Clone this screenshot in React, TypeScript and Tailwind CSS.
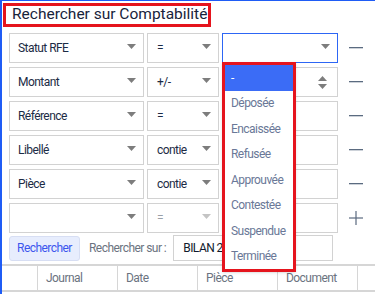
import React from "react";

type Row = {
  field: string;
  op: string;
  kind?: "focus" | "number" | "plain";
  action: "minus" | "plus";
  disabledOp?: boolean;
};

const rows: Row[] = [
  { field: "Statut RFE", op: "=", kind: "focus", action: "minus" },
  { field: "Montant", op: "+/-", kind: "number", action: "minus" },
  { field: "Référence", op: "=", action: "minus" },
  { field: "Libellé", op: "contie", action: "minus" },
  { field: "Pièce", op: "contie", action: "minus" },
  { field: "", op: "=", action: "plus", disabledOp: true },
];

const options = [
  "-",
  "Déposée",
  "Encaissée",
  "Refusée",
  "Approuvée",
  "Contestée",
  "Suspendue",
  "Terminée",
];

const columns = ["Journal", "Date", "Pièce", "Document"];

function Caret({ light }: { light?: boolean }) {
  return (
    <svg width="9" height="5" viewBox="0 0 9 5" className="shrink-0">
      <polygon points="0,0 9,0 4.5,5" fill={light ? "#c4c4c4" : "#7d7d7d"} />
    </svg>
  );
}

function Spinner() {
  return (
    <svg width="9" height="15" viewBox="0 0 9 15" className="shrink-0">
      <polygon points="0,6 9,6 4.5,1" fill="#7d7d7d" />
      <polygon points="0,9 9,9 4.5,14" fill="#7d7d7d" />
    </svg>
  );
}

function SearchRow({ row }: { row: Row }) {
  return (
    <div className="flex h-[30px] gap-[3px]">
      {/* field select */}
      <div className="flex w-[135px] items-center justify-between border border-[#d2d2d2] pl-[8px] pr-[7px] text-[#1c2b45]">
        <span>{row.field}</span>
        <span className="-mt-[3px]">
          <Caret />
        </span>
      </div>
      {/* operator select */}
      <div
        className={`flex w-[72px] items-center justify-between border border-[#d2d2d2] pl-[9px] pr-[7px] ${
          row.disabledOp ? "text-[#9aa0a8]" : "text-[#1c2b45]"
        }`}
      >
        <span>{row.op}</span>
        <span className="-mt-[3px]">
          <Caret light={row.disabledOp} />
        </span>
      </div>
      {/* value */}
      <div
        className={`flex w-[116px] items-center justify-end pr-[7px] ${
          row.kind === "focus"
            ? "border border-[#2d66f5]"
            : "border border-[#d2d2d2]"
        }`}
      >
        {row.kind === "focus" && (
          <span className="-mt-[3px]">
            <Caret />
          </span>
        )}
        {row.kind === "number" && (
          <span className="mr-[3px]">
            <Spinner />
          </span>
        )}
      </div>
      {/* add / remove */}
      <div className="ml-[8px] flex w-[14px] items-center justify-center">
        {row.action === "minus" ? (
          <svg width="14" height="2" viewBox="0 0 14 2">
            <rect x="0" y="0" width="14" height="1.3" fill="#5b6b80" />
          </svg>
        ) : (
          <svg width="14" height="14" viewBox="0 0 14 14">
            <rect x="0" y="6.4" width="14" height="1.2" fill="#5b6b80" />
            <rect x="6.4" y="0" width="1.2" height="14" fill="#5b6b80" />
          </svg>
        )}
      </div>
    </div>
  );
}

export default function App() {
  return (
    <div className="relative h-[294px] w-[375px] overflow-hidden border-l-2 border-t border-[#1f5cf5] bg-white font-['Roboto',sans-serif] text-[12px] tracking-[-0.55px]">
      {/* Title */}
      <div className="ml-[1px] mt-[2px] flex h-[24px] w-[208px] items-center whitespace-nowrap border-[3px] border-[#e5141d] pl-[6px] text-[15.5px] leading-none tracking-normal text-[#17233b]">
        Rechercher sur Comptabilité
      </div>

      {/* Criteria rows */}
      <div className="mt-[6px] flex flex-col gap-[4px] pl-[7px]">
        {rows.map((row, i) => (
          <SearchRow key={i} row={row} />
        ))}
      </div>

      {/* Actions */}
      <div className="mt-[2px] flex h-[26px] items-center pl-[7px]">
        <button className="flex h-[25px] w-[71px] items-center justify-center rounded-[3px] border border-[#d7def3] bg-[#e7edfd] text-[#3c56ee]">
          Rechercher
        </button>
        <span className="ml-[9px] text-[#6b7380]">Rechercher sur :</span>
        <div className="ml-[7px] flex h-[26px] w-[160px] items-center border border-[#d2d2d2] pl-[9px] text-[#111a2c]">
          <span className="block w-[40px] overflow-hidden whitespace-nowrap">
            BILAN 2024
          </span>
        </div>
      </div>

      {/* Table header */}
      <div className="mt-[3px] flex h-[28px] border-y-2 border-[#d6d6d6] text-[#6b7380]">
        <div className="w-[36px] border-r border-[#d6d6d6]" />
        {columns.map((c) => (
          <div
            key={c}
            className="flex w-[80px] items-center border-r border-[#d6d6d6] pl-[8px]"
          >
            {c}
          </div>
        ))}
      </div>

      {/* Open dropdown menu */}
      <div className="absolute left-[220px] top-[61px] w-[74px] border-[3px] border-[#e5141d] bg-white shadow-sm">
        {options.map((o, i) => (
          <div
            key={o}
            className={`flex h-[25.5px] items-center pl-[6px] ${
              i === 0 ? "bg-[#3b6cf6] text-white" : "text-[#6a7897]"
            }`}
          >
            {o}
          </div>
        ))}
      </div>
    </div>
  );
}
